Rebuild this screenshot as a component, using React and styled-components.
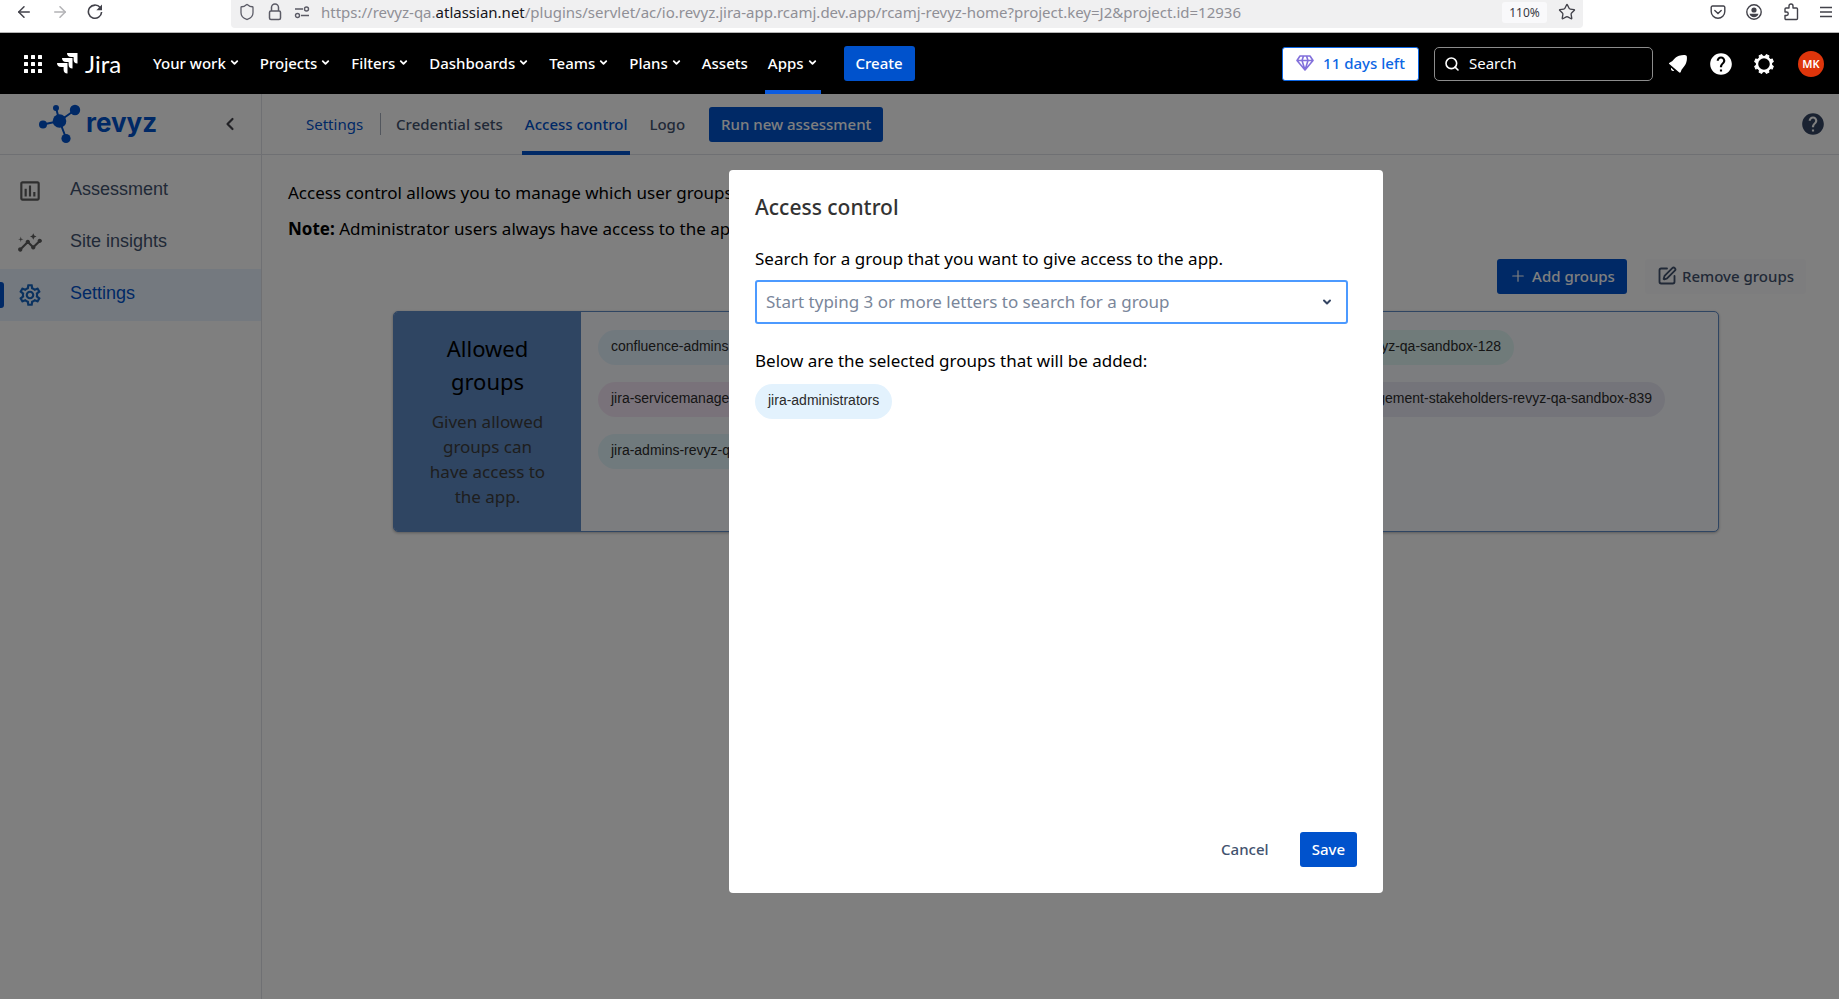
import React, { useState } from 'react';
import styled, { createGlobalStyle } from 'styled-components';
import { MdOutlineAssessment, MdInsights, MdOutlineSettings, MdHelp } from 'react-icons/md';
import { SquarePen, Shield, Star, ArrowLeft, ArrowRight, Search, ChevronDown, ChevronLeft, Plus } from 'lucide-react';

const navItems = [
    { label: 'Your work', menu: true },
    { label: 'Projects', menu: true },
    { label: 'Filters', menu: true },
    { label: 'Dashboards', menu: true },
    { label: 'Teams', menu: true },
    { label: 'Plans', menu: true },
    { label: 'Assets' },
    { label: 'Apps', menu: true, active: true },
]

const allowedGroups = [
    {
        inset: 187,
        groups: [
            { name: 'confluence-admins', color: '#e3f2fd' },
            { name: 'confluence-users-revyz-qa-sandbox-128', color: '#e0f7f5' },
        ],
    },
    {
        inset: 36,
        groups: [
            { name: 'jira-servicemanagement', color: '#f3e5f5' },
            { name: 'jira-servicemanagement-stakeholders-revyz-qa-sandbox-839', color: '#e8e9f5' },
        ],
    },
    {
        inset: 36,
        groups: [
            { name: 'jira-admins-revyz-qa', color: '#e0f4fa' },
        ],
    },
]

export default function App() {
    const [query, setQuery] = useState('')
    const [siteQuery, setSiteQuery] = useState('')

    return (
        <Page>
            <GlobalStyle />
            <BrowserBar>
                <BrowserButtons>
                    <IconButton aria-label="Back"><ArrowLeft size={18} strokeWidth={2} /></IconButton>
                    <IconButton aria-label="Forward" $faded><ArrowRight size={18} strokeWidth={2} /></IconButton>
                    <IconButton aria-label="Reload"><ReloadIcon /></IconButton>
                </BrowserButtons>
                <AddressBar>
                    <AddressIcons>
                        <Shield size={18} strokeWidth={1.7} />
                        <LockIcon />
                        <PermissionsIcon />
                    </AddressIcons>
                    <Address>https://revyz-qa.<b>atlassian.net</b>/plugins/servlet/ac/io.revyz.jira-app.rcamj.dev.app/rcamj-revyz-home?project.key=J2&amp;project.id=12936</Address>
                    <ZoomLevel>110%</ZoomLevel>
                    <IconButton aria-label="Bookmark"><Star size={18} strokeWidth={1.8} /></IconButton>
                </AddressBar>
                <BrowserTools>
                    <IconButton aria-label="Pocket"><PocketIcon /></IconButton>
                    <IconButton aria-label="Account"><AccountIcon /></IconButton>
                    <IconButton aria-label="Extensions"><ExtensionIcon /></IconButton>
                    <IconButton aria-label="Menu"><MenuIcon /></IconButton>
                </BrowserTools>
            </BrowserBar>

            <JiraBar>
                <IconButton aria-label="Switch to" $light><GridIcon /></IconButton>
                <JiraLogo href="#"><JiraMark />Jira</JiraLogo>
                <Nav>
                    {navItems.map((item) =>
                        <NavItem key={item.label} $active={item.active}>
                            {item.label}
                            {item.menu && <ChevronDown size={11} strokeWidth={4} />}
                        </NavItem>)}
                </Nav>
                <Button $primary>Create</Button>
                <JiraTools>
                    <TrialButton><GemIcon />11 days left</TrialButton>
                    <SiteSearch>
                        <Search size={16} strokeWidth={2.4} />
                        <input aria-label="Search" placeholder="Search" value={siteQuery} onChange={(e) => setSiteQuery(e.target.value)} />
                    </SiteSearch>
                    <RoundButtons>
                        <IconButton aria-label="Notifications" $light><BellIcon /></IconButton>
                        <IconButton aria-label="Help" $light><MdHelp size={26} /></IconButton>
                        <IconButton aria-label="Jira settings" $light><GearIcon /></IconButton>
                        <Avatar>MK</Avatar>
                    </RoundButtons>
                </JiraTools>
            </JiraBar>

            <Workspace>
                <Sidebar>
                    <Brand>
                        <BrandMark />
                        <BrandName>revyz</BrandName>
                        <IconButton aria-label="Collapse sidebar"><ChevronLeft size={20} strokeWidth={2.6} /></IconButton>
                    </Brand>
                    <SideNav>
                        <SideLink href="#"><MdOutlineAssessment size={26} /><span>Assessment</span></SideLink>
                        <SideLink href="#"><MdInsights size={26} /><span>Site insights</span></SideLink>
                        <SideLink href="#" $active><MdOutlineSettings size={26} /><span>Settings</span></SideLink>
                    </SideNav>
                </Sidebar>

                <Main>
                    <TabBar>
                        <SectionLink href="#">Settings</SectionLink>
                        <Tabs>
                            <Tab href="#">Credential sets</Tab>
                            <Tab href="#" $active>Access control</Tab>
                            <Tab href="#">Logo</Tab>
                        </Tabs>
                        <Button $primary>Run new assessment</Button>
                        <HelpButton aria-label="Help"><MdHelp size={26} /></HelpButton>
                    </TabBar>
                    <Content>
                        <p>Access control allows you to manage which user groups</p>
                        <p><b>Note:</b> Administrator users always have access to the app</p>
                        <Actions>
                            <Button $primary><Plus size={18} strokeWidth={1.6} />Add groups</Button>
                            <Button $subtle><SquarePen size={20} strokeWidth={2.2} />Remove groups</Button>
                        </Actions>
                        <Card>
                            <CardTitle>
                                <h2>Allowed groups</h2>
                                <p>Given allowed groups can have access to the app.</p>
                            </CardTitle>
                            <CardBody>
                                {allowedGroups.map((row, i) =>
                                    <ChipRow key={i} $inset={row.inset}>
                                        {row.groups.map((g) => <Chip key={g.name} $color={g.color} $wide>{g.name}</Chip>)}
                                    </ChipRow>)}
                            </CardBody>
                        </Card>
                    </Content>
                </Main>

                <Blanket>
                    <Modal role="dialog" aria-labelledby="modal-title">
                        <h1 id="modal-title">Access control</h1>
                        <label htmlFor="group-search">Search for a group that you want to give access to the app.</label>
                        <GroupSearch>
                            <input id="group-search" placeholder="Start typing 3 or more letters to search for a group" value={query} onChange={(e) => setQuery(e.target.value)} />
                            <ChevronDown size={12} strokeWidth={4} />
                        </GroupSearch>
                        <p>Below are the selected groups that will be added:</p>
                        <ChipRow>
                            <Chip $color="#e3f2fd">jira-administrators</Chip>
                        </ChipRow>
                        <ModalFooter>
                            <Button>Cancel</Button>
                            <Button $primary>Save</Button>
                        </ModalFooter>
                    </Modal>
                </Blanket>
            </Workspace>
        </Page>
    );
}

function ReloadIcon() {
    return (
        <svg width="16" height="16" viewBox="0 0 16 16" fill="none" stroke="currentColor" strokeWidth="1.6">
            <path d="M13.2 3.6A6.6 6.6 0 1 0 14.6 8" />
            <path d="M15 0.6v5.6H9.4z" fill="currentColor" stroke="none" />
        </svg>
    )
}

function LockIcon() {
    return (
        <svg width="14" height="18" viewBox="0 0 14 18" fill="none" stroke="currentColor" strokeWidth="1.5">
            <rect x="1.5" y="8" width="11" height="8.5" rx="1.5" />
            <path d="M3.5 8V4.5a3.5 3.5 0 0 1 7 0V8" />
        </svg>
    )
}

function PermissionsIcon() {
    return (
        <svg width="16" height="14" viewBox="0 0 16 14" fill="none" stroke="currentColor" strokeWidth="1.4">
            <path d="M1 4h8M7 10.5h8" />
            <circle cx="12.5" cy="4" r="2" />
            <circle cx="3.5" cy="10.5" r="2" />
        </svg>
    )
}

function PocketIcon() {
    return (
        <svg width="16" height="16" viewBox="0 0 16 16" fill="none" stroke="currentColor" strokeWidth="1.4" strokeLinecap="round">
            <path d="M2.500 2h11a1.300 1.300 0 0 1 1.300 1.300V7.500a6.800 6.800 0 0 1-13.600 0V3.300A1.300 1.300 0 0 1 2.500 2z" />
            <path d="M4.800 6.500L8 9.500l3.200-3" />
        </svg>
    )
}

function AccountIcon() {
    return (
        <svg width="16" height="16" viewBox="0 0 16 16">
            <circle cx="8" cy="8" r="7.2" fill="none" stroke="currentColor" strokeWidth="1.4" />
            <circle cx="8" cy="6" r="2.6" fill="currentColor" />
            <path d="M3.500 9.800h9c-.4 2.200-2.400 3.400-4.500 3.400s-4.100-1.200-4.500-3.400z" fill="currentColor" />
        </svg>
    )
}

function ExtensionIcon() {
    return (
        <svg width="16" height="18" viewBox="0 0 16 18" fill="none" stroke="currentColor" strokeWidth="1.4" strokeLinejoin="round">
            <path d="M6 5V3a2 2 0 0 1 4 0v2h3.500a1 1 0 0 1 1 1v9.500a1 1 0 0 1-1 1H3a1 1 0 0 1-1-1V12.500h1.500a1.700 1.700 0 0 0 0-3.500H2V6a1 1 0 0 1 1-1z" />
        </svg>
    )
}

function MenuIcon() {
    return (
        <svg width="14" height="12" viewBox="0 0 14 12" stroke="currentColor" strokeWidth="1.4">
            <path d="M1 1.5h12M1 6h12M1 10.5h12" />
        </svg>
    )
}

function GridIcon() {
    return (
        <svg width="18" height="18" viewBox="0 0 18 18" fill="currentColor">
            {[0, 7, 14].map((y) => [0, 7, 14].map((x) =>
                <rect key={x + '-' + y} x={x} y={y} width="4" height="4" rx="0.5" />))}
        </svg>
    )
}

function JiraMark() {
    return (
        <svg width="21" height="21" viewBox="0 0 21 21" fill="currentColor">
            <path d="M10 0h10.500v10.500c-2.600 0-3.900-1.600-3.900-4.100V3.900h-2.500C11.600 3.900 10 2.600 10 0z" />
            <path d="M5 5h10.500v10.500c-2.600 0-3.900-1.600-3.900-4.100V8.900H9.100C6.600 8.900 5 7.600 5 5z" />
            <path d="M0 10h10.500v10.500c-2.600 0-3.900-1.600-3.900-4.100v-2.500H4.100C1.600 13.900 0 12.600 0 10z" />
        </svg>
    )
}

function GemIcon() {
    return (
        <svg width="18" height="16" viewBox="0 0 18 16" fill="none" stroke="#8270db" strokeWidth="1.6" strokeLinejoin="round">
            <path d="M4 1h10l3 4.500L9 15 1 5.500zM1 5.500h16M6 5.500L9 15l3-9.500M6 5.500L7.500 1M12 5.500L10.500 1" />
        </svg>
    )
}

function BellIcon() {
    return (
        <svg width="20" height="20" viewBox="0 0 20 20" fill="currentColor">
            <path d="M1 9.800C.8 9 1.400 8.600 2 8.400 5.500 7.500 6.200 3.300 11 1.800c2.500-.7 5-.9 6.600-.6.900.2 1.200.9 1.300 1.700.2 2.300-.2 4.800-1.200 7-1.400 3.200-4.300 4.500-5 8-.2.800-1 1.100-1.700.4z" />
            <path d="M3.200 13.800l3 3c-2 1-4-1-3-3z" />
        </svg>
    )
}

function GearIcon() {
    return (
        <svg width="20" height="20" viewBox="0 0 20 20" fill="none" stroke="currentColor">
            <circle cx="10" cy="10" r="7" strokeWidth="2.4" />
            {[0, 45, 90, 135, 180, 225, 270, 315].map((a) =>
                <path key={a} d="M8.200 2.400L8.700.5h2.600l.5 1.900z" fill="currentColor" strokeWidth="1" transform={`rotate(${a + 22.5} 10 10)`} />)}
        </svg>
    )
}

function BrandMark() {
    return (
        <svg width="42" height="40" viewBox="0 0 42 40" fill="#0052cc" stroke="#0052cc">
            <path d="M20.500 17L17 4M20.500 17L36 6M20.500 17L4 20.500M20.500 17L27 34" strokeWidth="2" />
            <g stroke="none">
                <circle cx="20.5" cy="17" r="6.8" />
                <circle cx="17" cy="4" r="3" />
                <circle cx="36" cy="6" r="5.2" />
                <circle cx="4" cy="20.5" r="4" />
                <circle cx="27" cy="34.5" r="4.6" />
            </g>
        </svg>
    )
}

const GlobalStyle = createGlobalStyle`
    * {
        box-sizing: border-box;
    }
    body {
        margin: 0;
        background-color: white;
        font-family: "Noto Sans", sans-serif;
        font-size: 17px;
        color: black;
    }
    button, input {
        font-family: inherit;
    }
    h1, h2, p {
        margin: 0;
    }
    a {
        text-decoration: none;
    }
    svg {
        flex-shrink: 0;
    }
`

const Page = styled.div`
    height: 100vh;
    display: flex;
    flex-direction: column;
    padding-bottom: 2px;
`

const IconButton = styled.button`
    display: flex;
    align-items: center;
    justify-content: center;
    padding: 0;
    border: none;
    background: none;
    color: ${(p) => (p.$light ? 'white' : '#42424a')};
    opacity: ${(p) => (p.$faded ? 0.4 : 1)};
`

const BrowserBar = styled.div`
    display: flex;
    height: 33px;
    padding-bottom: 4px;
    border-bottom: 1px solid #b5b5b5;
`

const BrowserButtons = styled.div`
    display: flex;
    gap: 18px;
    width: 231px;
    height: 24px;
    padding-left: 15px;
`

const AddressBar = styled.div`
    flex: 1;
    display: flex;
    align-items: center;
    padding: 0 7px 4px;
    border-radius: 0 0 4px 4px;
    background-color: #f0f0f1;
`

const AddressIcons = styled.div`
    display: flex;
    align-items: center;
    gap: 12px;
    color: #5b5b66;
`

const Address = styled.div`
    flex: 1;
    padding-left: 11px;
    font-size: 15px;
    line-height: 24px;
    white-space: nowrap;
    color: #8f8f96;
    b {
        font-weight: normal;
        color: #15141a;
    }
`

const ZoomLevel = styled.div`
    width: 45px;
    margin-right: 11px;
    border-radius: 3px;
    background-color: #f9f9fb;
    font-size: 12px;
    line-height: 21px;
    text-align: center;
    color: #3a3a44;
`

const BrowserTools = styled.div`
    display: flex;
    justify-content: space-between;
    width: 256px;
    height: 24px;
    padding: 0 6px 0 127px;
`

const JiraBar = styled.header`
    display: flex;
    align-items: center;
    height: 61px;
    flex-shrink: 0;
    padding: 0 15px 0 24px;
    background-color: black;
    color: white;
`

const JiraLogo = styled.a`
    display: flex;
    align-items: center;
    gap: 7px;
    width: 93px;
    margin-left: 15px;
    font-family: Lato, sans-serif;
    font-size: 24px;
    line-height: 28px;
    color: white;
`

const Nav = styled.nav`
    display: flex;
    align-self: stretch;
    gap: 14px;
    margin-right: 23px;
`

const NavItem = styled.button`
    display: flex;
    align-items: center;
    gap: 3px;
    padding: 2px 3px 0;
    border: none;
    border-bottom: 4px solid ${(p) => (p.$active ? '#0c5ce0' : 'transparent')};
    background: none;
    font-size: 15px;
    font-weight: 500;
    color: white;
`

const Button = styled.button`
    display: flex;
    align-items: center;
    justify-content: center;
    gap: 5px;
    height: 35px;
    padding: 0 12px 1px;
    border: none;
    border-radius: 3px;
    background-color: ${(p) => (p.$primary ? '#0052cc' : p.$subtle ? '#fafbfc' : 'transparent')};
    font-size: 15px;
    font-weight: 500;
    white-space: nowrap;
    color: ${(p) => (p.$primary ? 'white' : '#42526e')};
`

const JiraTools = styled.div`
    display: flex;
    align-items: center;
    gap: 15px;
    margin-left: auto;
`

const TrialButton = styled.button`
    display: flex;
    align-items: center;
    justify-content: center;
    gap: 9px;
    width: 137px;
    height: 34px;
    padding: 0 0 1px;
    border: 1px solid #0c66e4;
    border-radius: 3px;
    background-color: white;
    font-size: 15px;
    font-weight: 500;
    color: #0c66e4;
`

const SiteSearch = styled.div`
    display: flex;
    align-items: center;
    gap: 8px;
    width: 219px;
    height: 34px;
    padding: 0 9px;
    border: 1px solid #8c8c8c;
    border-radius: 5px;
    input {
        flex: 1;
        min-width: 0;
        padding: 0 0 1px 1px;
        border: none;
        outline: none;
        background: none;
        font-size: 15px;
        color: white;
    }
    input::placeholder {
        color: white;
    }
`

const RoundButtons = styled.div`
    display: flex;
    align-items: center;
    gap: 20px;
`

const Avatar = styled.button`
    width: 26px;
    height: 26px;
    margin-left: 4px;
    padding: 0;
    border: none;
    border-radius: 50%;
    background-color: #de350b;
    font-size: 11px;
    font-weight: 600;
    color: white;
`

const Workspace = styled.div`
    position: relative;
    flex: 1;
    display: flex;
    min-height: 0;
`

const Sidebar = styled.aside`
    width: 262px;
    border-right: 1px solid #dfe1e6;
`

const Brand = styled.div`
    display: flex;
    align-items: center;
    height: 61px;
    padding: 0 21px 0 39px;
    border-bottom: 1px solid #dfe1e6;
    ${IconButton} {
        margin-left: auto;
    }
`

const BrandName = styled.span`
    padding: 0 0 2px 5px;
    font-family: Inter, sans-serif;
    font-size: 26px;
    line-height: 32px;
    font-weight: 700;
    color: #0052cc;
`

const SideNav = styled.nav`
    padding-top: 10px;
`

const SideLink = styled.a`
    display: flex;
    align-items: center;
    height: 52px;
    background-color: ${(p) => (p.$active ? '#e8f2ff' : 'transparent')};
    font-family: "Liberation Sans", sans-serif;
    font-size: 18px;
    color: ${(p) => (p.$active ? '#0052cc' : '#42526e')};
    &::before {
        content: "";
        width: 4px;
        height: 26px;
        border-radius: 0 3px 3px 0;
        background-color: ${(p) => (p.$active ? '#0052cc' : 'transparent')};
    }
    svg {
        margin: 0 27px 0 13px;
        color: ${(p) => (p.$active ? '#1565c0' : '#5e5e5e')};
    }
    span {
        padding-bottom: 4px;
    }
`

const Main = styled.main`
    flex: 1;
    min-width: 0;
`

const TabBar = styled.div`
    display: flex;
    align-items: center;
    height: 61px;
    padding: 0 13px 0 44px;
    border-bottom: 1px solid #dfe1e6;
    font-size: 15px;
`

const SectionLink = styled.a`
    padding-right: 17px;
    margin-right: 12px;
    border-right: 1px solid #a5adba;
    line-height: 22px;
    color: #0052cc;
`

const Tabs = styled.nav`
    display: flex;
    gap: 16px;
    margin-right: 21px;
`

const Tab = styled.a`
    display: flex;
    align-items: center;
    height: 61px;
    padding: 4px 3px 0;
    border-bottom: 4px solid ${(p) => (p.$active ? '#0052cc' : 'transparent')};
    font-weight: 500;
    color: ${(p) => (p.$active ? '#0052cc' : '#42526e')};
`

const HelpButton = styled(IconButton)`
    margin-left: auto;
    color: #344563;
`

const Content = styled.div`
    padding: 26px 15px 0 26px;
    > p {
        margin-bottom: 12px;
        line-height: 24px;
        white-space: nowrap;
    }
`

const Actions = styled.div`
    display: flex;
    justify-content: flex-end;
    gap: 18px;
    padding: 6px 18px 17px 0;
`

const Card = styled.section`
    display: flex;
    min-height: 221px;
    margin: 0 105px;
    border: 1px solid #5e8ac4;
    border-radius: 5px;
    background-color: #f8fafe;
    box-shadow: 0 1px 3px rgba(0, 0, 0, 0.3);
    overflow: hidden;
`

const CardTitle = styled.div`
    width: 187px;
    flex-shrink: 0;
    padding: 20px 34px;
    background-color: #5e8ac4;
    text-align: center;
    h2 {
        margin-bottom: 11px;
        font-size: 22px;
        font-weight: normal;
        line-height: 33px;
    }
    p {
        line-height: 25px;
        color: #3c3c3c;
    }
`

const CardBody = styled.div`
    flex: 1;
    display: flex;
    flex-direction: column;
    gap: 17px;
    padding: 18px 17px;
`

const ChipRow = styled.div`
    display: flex;
    justify-content: space-between;
    margin-right: ${(p) => p.$inset || 0}px;
`

const Chip = styled.span`
    min-width: ${(p) => (p.$wide ? '240px' : '0')};
    padding: 0 13px 3px;
    border-radius: 18px;
    background-color: ${(p) => p.$color};
    font-family: "Liberation Sans", sans-serif;
    font-size: 14px;
    line-height: 32px;
    white-space: nowrap;
    color: #2b2b2b;
`

const Blanket = styled.div`
    position: absolute;
    inset: 0;
    display: flex;
    justify-content: center;
    align-items: flex-start;
    padding: 76px 0 0 273px;
    background-color: rgba(0, 0, 0, 0.5);
`

const Modal = styled.div`
    display: flex;
    flex-direction: column;
    width: 654px;
    height: calc(100% - 106px);
    padding: 25px 26px 26px;
    border-radius: 4px;
    background-color: white;
    h1 {
        margin-bottom: 28px;
        font-size: 21px;
        font-weight: 500;
        line-height: 24px;
        color: #333;
    }
    > label {
        margin-bottom: 9px;
        line-height: 24px;
    }
    > p {
        margin: 25px 0 11px;
        line-height: 24px;
    }
`

const GroupSearch = styled.div`
    display: flex;
    align-items: center;
    height: 44px;
    margin-right: 9px;
    padding: 0 13px 0 9px;
    border: 2px solid #4c9aff;
    border-radius: 3px;
    color: #344563;
    input {
        flex: 1;
        padding: 0 0 2px;
        border: none;
        outline: none;
        background: none;
        font-size: 17px;
    }
    input::placeholder {
        color: #7a869a;
    }
`

const ModalFooter = styled.div`
    display: flex;
    justify-content: flex-end;
    gap: 19px;
    margin-top: auto;
`
